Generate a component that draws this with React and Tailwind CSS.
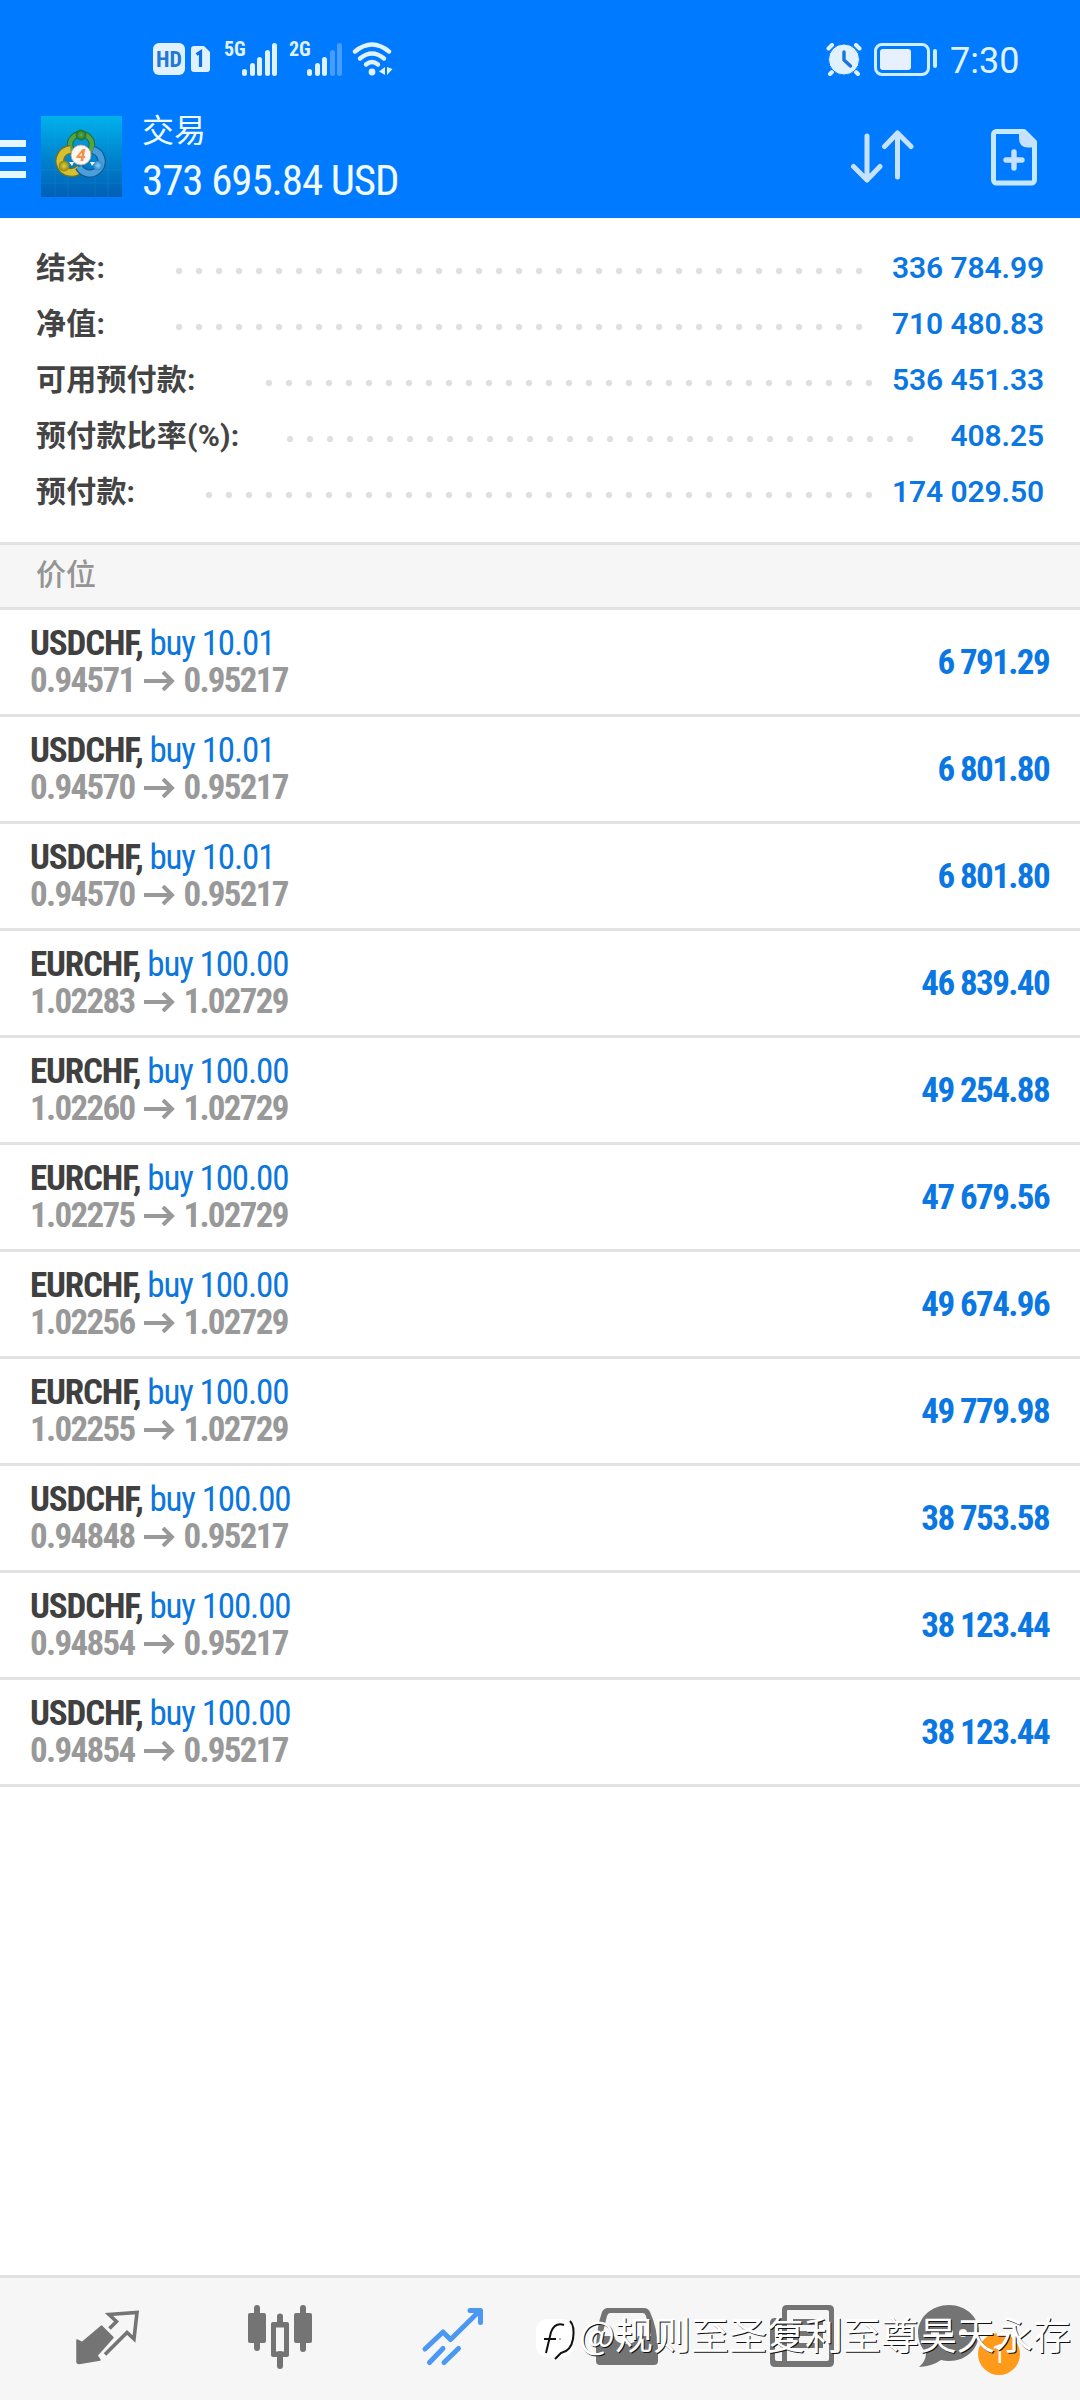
import React from 'react'

const summary = [
  { label: '结余:', value: '336 784.99', labelWidth: 133, dots: 35 },
  { label: '净值:', value: '710 480.83', labelWidth: 133, dots: 35 },
  { label: '可用预付款:', value: '536 451.33', labelWidth: 223, dots: 31 },
  { label: '预付款比率(%):', value: '408.25', labelWidth: 244, dots: 32 },
  { label: '预付款:', value: '174 029.50', labelWidth: 163, dots: 34 },
]

const positions = [
  { symbol: 'USDCHF', volume: '10.01', open: '0.94571', price: '0.95217', profit: '6 791.29' },
  { symbol: 'USDCHF', volume: '10.01', open: '0.94570', price: '0.95217', profit: '6 801.80' },
  { symbol: 'USDCHF', volume: '10.01', open: '0.94570', price: '0.95217', profit: '6 801.80' },
  { symbol: 'EURCHF', volume: '100.00', open: '1.02283', price: '1.02729', profit: '46 839.40' },
  { symbol: 'EURCHF', volume: '100.00', open: '1.02260', price: '1.02729', profit: '49 254.88' },
  { symbol: 'EURCHF', volume: '100.00', open: '1.02275', price: '1.02729', profit: '47 679.56' },
  { symbol: 'EURCHF', volume: '100.00', open: '1.02256', price: '1.02729', profit: '49 674.96' },
  { symbol: 'EURCHF', volume: '100.00', open: '1.02255', price: '1.02729', profit: '49 779.98' },
  { symbol: 'USDCHF', volume: '100.00', open: '0.94848', price: '0.95217', profit: '38 753.58' },
  { symbol: 'USDCHF', volume: '100.00', open: '0.94854', price: '0.95217', profit: '38 123.44' },
  { symbol: 'USDCHF', volume: '100.00', open: '0.94854', price: '0.95217', profit: '38 123.44' },
]

function SignalBars({ label, active }) {
  const heights = [7, 13, 19, 26, 33]
  return (
    <div className="flex h-[33px]">
      <span className="-mt-0.5 font-['Roboto_Condensed',sans-serif] font-bold text-[20px] leading-[16px] w-[17px] -ml-px mr-px">{label}</span>
      <div className="flex items-end gap-[2.5px]">
        {heights.map((h, i) => (
          <div key={h} className={i < active ? 'w-[5px] rounded-full bg-[#e0f2ff]' : 'w-[5px] rounded-full bg-[#459eff]'} style={{ height: h }} />
        ))}
      </div>
    </div>
  )
}

function StatusBar() {
  return (
    <div className="flex justify-between pt-[43px] pl-[153px] pr-[59px] h-[90px] text-[#e0f2ff]">
      <div className="flex">
        <div className="w-8 h-8 rounded-[6px] bg-[#e0f2ff] text-[#2478d4] font-['Roboto_Condensed',sans-serif] font-bold text-[22px] leading-[33px] text-center">HD</div>
        <svg className="ml-[6px] mt-[3px]" width="19" height="26" viewBox="0 0 19 26">
          <path d="M3 0h10l6 6v17a3 3 0 0 1-3 3H3a3 3 0 0 1-3-3V3a3 3 0 0 1 3-3z" fill="#e0f2ff" />
          <path d="M5.5 8.5 9.5 6v15" fill="none" stroke="#0a6fe6" strokeWidth="3.2" />
        </svg>
        <div className="ml-[15px]"><SignalBars label="5G" active={5} /></div>
        <div className="ml-[13px]"><SignalBars label="2G" active={3} /></div>
        <svg className="ml-[10px] -mt-px" width="42" height="34" viewBox="0 0 42 34" fill="none" stroke="#e0f2ff" strokeWidth="4.4" strokeLinecap="round">
          <path d="M3 9.500Q20 -4.500 37 9.500" />
          <path d="M8 16.500Q20 6.500 32 16.500" />
          <path d="M14 22.500Q20 17.500 26 22.500" />
          <circle cx="20" cy="30" r="3.400" fill="#e0f2ff" stroke="none" />
          <path d="M33 25v8l-6-3.500zM35 25v8l5.500-6z" fill="#e0f2ff" stroke="none" />
        </svg>
      </div>
      <div className="flex">
        <svg width="36" height="33" viewBox="0 0 36 33">
          <g stroke="#e0f2ff" strokeWidth="4" strokeLinecap="round">
            <path d="M2.500 5.500 6 2M33.500 5.500 30 2M6 29l-2 2M30 29l2 2" />
          </g>
          <circle cx="18" cy="16.500" r="15.500" fill="#e0f2ff" stroke="#007aff" strokeWidth="1" />
          <path d="M18 9v8l6.500 6" fill="none" stroke="#1a74dc" strokeWidth="3.400" strokeLinecap="round" strokeLinejoin="round" />
        </svg>
        <div className="ml-3 w-[56px] h-[33px] rounded-[8px] border-[3px] border-[#cfeeff] p-[3px]">
          <div className="w-[31px] h-[21px] rounded-[3px] bg-[#e6f0ff]" />
        </div>
        <div className="ml-[3px] mt-[6px] w-[4px] h-[19px] rounded-full bg-[#cfeeff]" />
        <span className="ml-[13px] w-[71px] whitespace-nowrap font-['Roboto',sans-serif] font-normal text-[36px] leading-[37px]">7:30</span>
      </div>
    </div>
  )
}

function AppLogo() {
  return (
    <svg width="81" height="81" viewBox="0 0 81 81">
      <defs>
        <linearGradient id="sea" x1="0" y1="0" x2="0" y2="1">
          <stop offset="0" stopColor="#00b2ec" />
          <stop offset="0.5" stopColor="#0085cf" />
          <stop offset="1" stopColor="#005fb4" />
        </linearGradient>
        <radialGradient id="leaf"><stop offset="0" stopColor="#5db04a" /><stop offset="1" stopColor="#1f6d2a" /></radialGradient>
        <radialGradient id="gold"><stop offset="0" stopColor="#e8cf3e" /><stop offset="1" stopColor="#8a8512" /></radialGradient>
        <radialGradient id="sky"><stop offset="0" stopColor="#8fd3f8" /><stop offset="1" stopColor="#2a86c6" /></radialGradient>
      </defs>
      <rect width="81" height="81" fill="url(#sea)" />
      <path d="M14 0v81M27 0v81M54 0v81M67 0v81M0 14h81M0 27h81M0 54h81M0 67h81" stroke="#36a6e0" strokeWidth="1" opacity="0.2" />
      <circle cx="40" cy="29" r="11" fill="none" stroke="#23702f" strokeWidth="6.500" />
      <circle cx="40" cy="29" r="11" fill="none" stroke="#4fa548" strokeWidth="4.500" />
      <path d="M29.500 33.500a11.500 11.500 0 1 0 9.500 19" fill="none" stroke="#77711a" strokeWidth="9" />
      <path d="M29.500 33.500a11.500 11.500 0 1 0 9.500 19" fill="none" stroke="#d5c034" strokeWidth="6.500" />
      <path d="M52 34a12 12 0 1 1-14 17" fill="none" stroke="#13599b" strokeWidth="8.500" />
      <path d="M52 34a12 12 0 1 1-14 17" fill="none" stroke="#4a9fdb" strokeWidth="6" />
      <circle cx="40" cy="19" r="5.400" fill="url(#leaf)" />
      <circle cx="23" cy="50" r="5.400" fill="url(#gold)" />
      <circle cx="57" cy="49.500" r="4.800" fill="url(#sky)" />
      <path d="M28 46h5l-2 4zM49 46h5l-3 4z" fill="#fff" />
      <circle cx="40" cy="39" r="10" fill="#fbf6f2" stroke="#b9a98c" strokeWidth="0.800" />
      <text x="40" y="45" textAnchor="middle" fontFamily="Roboto, sans-serif" fontWeight="800" fontStyle="italic" fontSize="17" fill="#f0924a">4</text>
    </svg>
  )
}

function AppBar() {
  return (
    <div className="flex h-[128px]">
      <div className="flex flex-col gap-[9px] pt-[50px] w-[26px]">
        <div className="h-[6.500px] bg-[#e6f8ff]" />
        <div className="h-[6.500px] bg-[#e6f8ff]" />
        <div className="h-[6.500px] bg-[#e6f8ff]" />
      </div>
      <div className="ml-[15px] pt-[26px]"><AppLogo /></div>
      <div className="ml-[20px] pt-[16px] flex-1 text-[#f0fbff]">
        <div className="font-['Noto_Sans_CJK_SC',sans-serif] text-[32px] leading-[44px]">交易</div>
        <div className="mt-[6px] whitespace-nowrap font-['Roboto_Condensed',sans-serif] text-[43px] leading-[48px] tracking-[-1.1px]">373 695.84 USD</div>
      </div>
      <svg className="mt-[38px]" width="64" height="57" viewBox="0 0 64 57" fill="none" stroke="#c6e2ff" strokeWidth="5" strokeLinecap="round" strokeLinejoin="round">
        <path d="M17 8v44M3.500 38.500 17 52l13-13.500M47.500 49V5M34.500 18.500 47.500 5 61 18.500" />
      </svg>
      <svg className="ml-[77px] mr-[43px] mt-[39px]" width="46" height="57" viewBox="0 0 46 57">
        <path d="M5 2.500h28L43.500 13v38a3 3 0 0 1-3 3H5.500a3 3 0 0 1-3-3V5.500a3 3 0 0 1 3-3z" fill="none" stroke="#c6e8ff" strokeWidth="5" strokeLinejoin="round" />
        <path d="M28 3h6l10 10v5.500h-7q-9 0-9-9z" fill="#c6e0ff" />
        <path d="M23 23v16M15 31h16" stroke="#c6e0ff" strokeWidth="5.400" strokeLinecap="round" />
      </svg>
    </div>
  )
}

function Summary() {
  return (
    <div className="h-[324px] pt-[22px] pl-[36px] pr-[36px]">
      {summary.map(row => (
        <div key={row.label} className="flex items-center h-14">
          <span className="shrink-0 whitespace-nowrap font-['Roboto','Noto_Sans_CJK_SC',sans-serif] font-bold text-[30px] leading-[44px] tracking-[0.2px] text-[#444444]" style={{ width: row.labelWidth }}>{row.label}</span>
          <div className="mt-[5px] h-5 bg-[radial-gradient(circle,#e0e0e0_2.800px,transparent_3.600px)] bg-[length:20px_20px]" style={{ width: row.dots * 20 }} />
          <span className="ml-auto whitespace-nowrap font-['Roboto',sans-serif] font-semibold text-[30px] leading-[44px] tracking-[-0.1px] text-[#0b77e3]">{row.value}</span>
        </div>
      ))}
    </div>
  )
}

function PositionRow({ item }) {
  return (
    <div className="flex justify-between h-[107px] border-b-[3px] border-[#e2e2e2] pt-[15px] pl-[30px] pr-[31px] font-['Roboto_Condensed',sans-serif] text-[35px] leading-[37px]">
      <div>
        <div className="tracking-[-1.15px]">
          <span className="font-bold text-[#404040]">{item.symbol},</span>
          <span className="text-[#0b77de]"> buy {item.volume}</span>
        </div>
        <div className="flex items-center font-bold text-[#999999] tracking-[-1.7px]">
          {item.open}
          <svg className="ml-[10px] mr-[8px]" width="31" height="20" viewBox="0 0 31 20" fill="none" stroke="#999999" strokeWidth="4">
            <path d="M0 10h28M19 1l9 9-9 9" />
          </svg>
          {item.price}
        </div>
      </div>
      <div className="pt-[19px] font-bold text-[#0b77e3] tracking-[-1.6px]">{item.profit}</div>
    </div>
  )
}

function BottomNav() {
  return (
    <div className="relative mt-auto h-[125px] border-t-[3px] border-[#e0e2e2] bg-[#f6f6f6]">
      <div className="flex items-start pt-[27px] pl-[75px]">
        <svg className="mt-[4px]" width="66" height="60" viewBox="0 0 66 60">
          <path d="M2 31l5 2.500L26.500 17 38 28.500 22 46.500l3 4.500L4 54.500q-2 0-2-2z" fill="#747474" stroke="#747474" strokeWidth="1.500" strokeLinejoin="round" />
          <path d="M34.500 19.500 41.500 12.500 34 5.500 62 3.500 59 30l-7-6.500L30 45.500" fill="none" stroke="#747474" strokeWidth="3.600" />
        </svg>
        <svg className="ml-[107px]" width="66" height="66" viewBox="0 0 66 66" fill="#747474">
          <rect x="0" y="8" width="18" height="30" rx="2" />
          <rect x="6" y="0" width="6" height="46" rx="3" />
          <rect x="46" y="8" width="18" height="30" rx="2" />
          <rect x="52" y="0" width="6" height="47" rx="3" />
          <rect x="29" y="8.500" width="6" height="12" rx="3" />
          <rect x="29" y="46" width="6" height="18" rx="3" />
          <path fillRule="evenodd" d="M25 17h14q2 0 2 2v31q0 2-2 2H25q-2 0-2-2V19q0-2 2-2zm3 5.500v24h8v-24z" />
        </svg>
        <svg className="ml-[107px] mt-[2px]" width="64" height="60" viewBox="0 0 64 60" fill="none" stroke="#4a98f2" strokeWidth="5" strokeLinecap="round" strokeLinejoin="round">
          <path d="M4 42 22 25l7.500 7.500L58 4.500M49 3.500h10.500v12M8.500 55.500 22 41.500M23 55.500 37.500 41.500" />
        </svg>
        <svg className="ml-[111px] mt-[3px]" width="62" height="57" viewBox="0 0 62 57">
          <path fillRule="evenodd" d="M12 0h36q4 0 6 4 7 15 8 36v13q0 4-4 4H4q-4 0-4-4V40Q1 18 6 4q2-4 6-4zm2 5q-2 0-3 3L6 28h12q2 8 12 8t12-8h13L50 8q-1-3-3-3z" fill="#747474" />
        </svg>
        <svg className="ml-[112px]" width="64" height="62" viewBox="0 0 64 62">
          <path fillRule="evenodd" d="M17 0h42q5 0 5 5v52q0 5-5 5H5q-5 0-5-5V18q0-5 5-5h7V5q0-5 5-5zm1 5q-1 0-1 1v50h40q2 0 2-2V7q0-2-2-2zM5 20v34q0 2 2 2h5V20z" fill="#747474" />
          <path d="M23 14h30v6H23z" fill="#747474" />
          <path fillRule="evenodd" d="M23 26h30v17H23zm6 5v7h18v-7z" fill="#747474" />
        </svg>
        <svg className="ml-[84px]" width="64" height="62" viewBox="0 0 64 62">
          <path d="M31 0C48 0 61 12 61 28S48 56 31 56q-4 0-8-1-8 6-22 7 7-6 7-14Q0 39 0 28C0 12 14 0 31 0z" fill="#747474" />
          <circle cx="17" cy="28" r="4" fill="#f6f6f6" />
          <circle cx="31" cy="28" r="4" fill="#f6f6f6" />
          <circle cx="45" cy="28" r="4" fill="#f6f6f6" />
        </svg>
      </div>
      <div className="absolute left-[978px] top-[55px] w-[42px] h-[42px] rounded-full bg-[#ff9a1a] text-white text-center font-['Roboto',sans-serif] text-[25px] leading-[44px]">1</div>
      <div className="absolute left-[536px] top-[28px] flex items-center text-white">
        <svg width="43" height="54" viewBox="0 0 43 54">
          <rect x="0" y="13" width="37" height="38" rx="11" fill="#fff" />
          <path d="M10 47 15 26q4-10 13-7M8 33h12" fill="none" stroke="#111" strokeWidth="2" />
          <path d="M34 15q5 5 3 18-2 12-12 14l-6 6" fill="none" stroke="#111" strokeWidth="2" />
          <circle cx="24" cy="33" r="1" fill="#999" />
        </svg>
        <span className="whitespace-nowrap font-['Noto_Sans_CJK_SC',sans-serif] text-[38px] leading-[54px] [text-shadow:1px_1px_0_#111]">@规则至圣复利至尊昊天永存</span>
      </div>
    </div>
  )
}

export default function App() {
  return (
    <div className="flex flex-col w-[1080px] h-[2400px] overflow-hidden bg-white">
      <header className="h-[218px] bg-[#007aff]">
        <StatusBar />
        <AppBar />
      </header>
      <Summary />
      <div className="h-[68px] border-y-[3px] border-[#e2e2e2] bg-[#f6f6f6] pl-[36px] font-['Noto_Sans_CJK_SC',sans-serif] font-medium text-[30px] leading-[55px] text-[#949494]">价位</div>
      <div>
        {positions.map((item, i) => <PositionRow key={i} item={item} />)}
      </div>
      <BottomNav />
    </div>
  )
}
